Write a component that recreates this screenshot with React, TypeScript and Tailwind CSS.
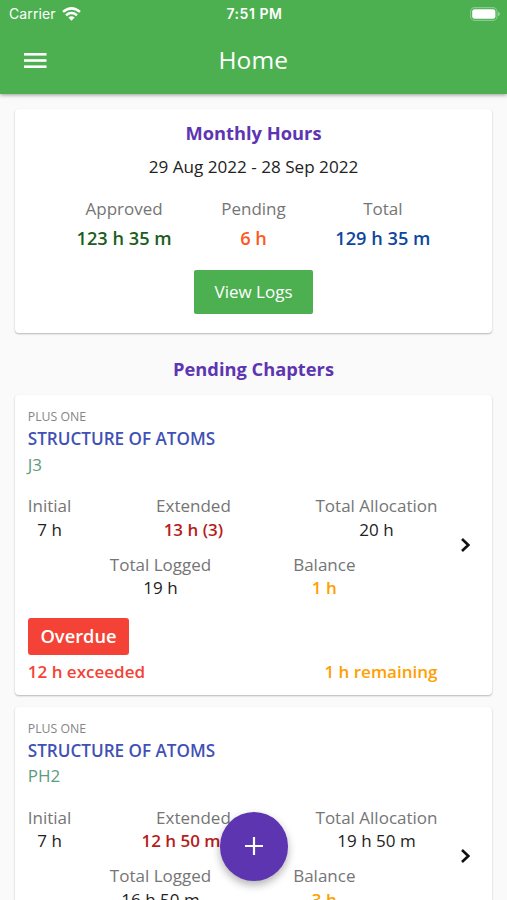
import type { ReactNode } from "react";

type Chapter = {
  course: string;
  title: string;
  batch: string;
  extended: string;
  allocation: string;
  logged: string;
  balance: string;
  exceeded: string;
  remaining: string;
};

const chapters: Chapter[] = [
  {
    course: "PLUS ONE",
    title: "STRUCTURE OF ATOMS",
    batch: "J3",
    extended: "13 h (3)",
    allocation: "20 h",
    logged: "19 h",
    balance: "1 h",
    exceeded: "12 h exceeded",
    remaining: "1 h remaining",
  },
  {
    course: "PLUS ONE",
    title: "STRUCTURE OF ATOMS",
    batch: "PH2",
    extended: "12 h 50 m (3)",
    allocation: "19 h 50 m",
    logged: "16 h 50 m",
    balance: "3 h",
    exceeded: "12 h exceeded",
    remaining: "3 h remaining",
  },
];

function StatusBar() {
  return (
    <div className="flex h-[27px] items-center justify-between pr-[7px] pl-[9px]">
      <div className="flex w-[120px] items-center gap-[6px] font-['Inter',sans-serif] text-[14px] tracking-[0.1px]">
        Carrier
        <svg className="h-[14px] w-[19px]" viewBox="0 0 19 14" fill="none" stroke="currentColor" strokeWidth="2.5">
          <path d="M1 4.9Q9.5-2.2 18 4.9" />
          <path d="M4 8.2Q9.5 3.9 15 8.2" />
          <path d="M9.5 13.8L6.4 10.6Q9.5 8 12.6 10.6Z" fill="currentColor" stroke="none" />
        </svg>
      </div>
      <div className="font-['Inter',sans-serif] text-[14px] font-semibold tracking-[0.55px]">7:51 PM</div>
      <div className="flex w-[120px] justify-end">
        <svg className="h-[14px] w-[30px]" viewBox="0 0 30 14">
          <rect x="0.6" y="0.6" width="26.4" height="12.8" rx="4" fill="none" stroke="#fff" strokeOpacity="0.35" strokeWidth="1.1" />
          <rect x="2.2" y="2.2" width="23.2" height="9.6" rx="2.4" fill="#fff" />
          <path d="M28.2 4.8Q29.8 5.6 29.8 7T28.2 9.2Z" fill="#fff" fillOpacity="0.5" />
        </svg>
      </div>
    </div>
  );
}

function Card({ children, className }: { children: ReactNode; className: string }) {
  return (
    <section className={`mx-[15px] rounded-[4px] bg-white shadow-[0_1px_2px_rgba(0,0,0,0.28)] ${className}`}>
      {children}
    </section>
  );
}

function Total({ label, value, color }: { label: string; value: string; color: string }) {
  return (
    <div className="flex flex-col items-center">
      <span className="text-[17px] leading-[30px] text-[#757575]">{label}</span>
      <span className={`text-[18.2px] leading-[29px] font-semibold ${color}`}>{value}</span>
    </div>
  );
}

function Stat({ label, value, color }: { label: string; value: string; color: string }) {
  return (
    <div className="flex flex-col items-center leading-[23.5px]">
      <span className="text-[#757575]">{label}</span>
      <span className={color}>{value}</span>
    </div>
  );
}

function ChapterCard({ chapter }: { chapter: Chapter }) {
  return (
    <Card className="mb-[12px] flex h-[299.5px] shrink-0 items-center pl-[12.8px] text-[17px]">
      <div className="h-full w-[409.7px] shrink-0 pt-[12px] whitespace-nowrap">
        <div className="text-[12.3px] leading-[20px] text-[#858585]">{chapter.course}</div>
        <div className="text-[17.1px] leading-[24.5px] font-semibold text-[#3f51b5]">{chapter.title}</div>
        <div className="leading-[26px] text-[#5c9c80]">{chapter.batch}</div>
        <div className="mt-[16.5px] flex justify-between">
          <Stat label="Initial" value="7 h" color="text-[#222]" />
          <Stat label="Extended" value={chapter.extended} color="font-semibold text-[#b71c1c]" />
          <Stat label="Total Allocation" value={chapter.allocation} color="text-[#222]" />
        </div>
        <div className="mt-[11.5px] flex justify-evenly">
          <Stat label="Total Logged" value={chapter.logged} color="text-[#222]" />
          <Stat label="Balance" value={chapter.balance} color="font-semibold text-[#ffa000]" />
        </div>
        <div className="mt-[18px] flex">
          <span className="flex h-[37px] w-[101.5px] items-center justify-center rounded-[3px] bg-[#f44336] text-[18.3px] font-semibold text-white">
            Overdue
          </span>
        </div>
        <div className="mt-[4px] flex justify-between leading-[25px] font-semibold">
          <span className="text-[#f44336]">{chapter.exceeded}</span>
          <span className="text-[#ffa000]">{chapter.remaining}</span>
        </div>
      </div>
      <svg className="ml-[23.5px] h-[14px] w-[9px]" viewBox="0 0 9 14" fill="none" stroke="#111" strokeWidth="2.6">
        <path d="M1 1L7.3 7L1 13" />
      </svg>
    </Card>
  );
}

export default function App() {
  return (
    <div className="relative flex h-[900px] w-[507px] flex-col overflow-hidden bg-[#fafafa] font-['Open_Sans','Noto_Sans',sans-serif]">
      <header className="h-[94px] shrink-0 bg-[#4caf50] text-white shadow-[0_1px_4px_rgba(0,0,0,0.4)]">
        <StatusBar />
        <div className="flex h-[66px] items-center justify-between px-[24px]">
          <button aria-label="Menu" className="w-[22.5px]">
            <svg className="block h-[15px] w-[22.5px]" viewBox="0 0 22.5 15" fill="#fff">
              <rect y="0" width="22.5" height="2.6" />
              <rect y="6.2" width="22.5" height="2.6" />
              <rect y="12.4" width="22.5" height="2.6" />
            </svg>
          </button>
          <h1 className="text-[24.5px] tracking-[0.1px]">Home</h1>
          <span className="w-[23px]" />
        </div>
      </header>

      <Card className="mt-[15px] flex h-[224px] shrink-0 flex-col items-center px-[12px] pt-[8px]">
        <h2 className="text-[18.3px] leading-[32px] font-bold text-[#5e35b1]">Monthly Hours</h2>
        <p className="pt-[1px] text-[17.1px] leading-[34px] text-[#222]">29 Aug 2022 - 28 Sep 2022</p>
        <div className="mt-[10px] flex w-full justify-evenly">
          <Total label="Approved" value="123 h 35 m" color="text-[#1b5e20]" />
          <Total label="Pending" value="6 h" color="text-[#ff5722]" />
          <Total label="Total" value="129 h 35 m" color="text-[#0d47a1]" />
        </div>
        <button className="mt-[16.5px] h-[44px] w-[119px] rounded-[2px] bg-[#4caf50] pt-[1px] text-[17px] text-white">View Logs</button>
      </Card>

      <h2 className="mt-[23px] mb-[13px] text-center text-[18.3px] leading-[26px] font-bold text-[#5e35b1]">
        Pending Chapters
      </h2>

      {chapters.map((chapter) => (
        <ChapterCard key={chapter.batch} chapter={chapter} />
      ))}

      <button
        aria-label="Add log"
        className="absolute top-[812px] left-[219.5px] flex size-[68.5px] items-center justify-center rounded-full bg-[#5e35b1] shadow-[0_4px_8px_rgba(0,0,0,0.3)]"
      >
        <svg className="size-[18px]" viewBox="0 0 18 18" stroke="#fff" strokeWidth="2.2">
          <path d="M9 0V18M0 9H18" />
        </svg>
      </button>
    </div>
  );
}
